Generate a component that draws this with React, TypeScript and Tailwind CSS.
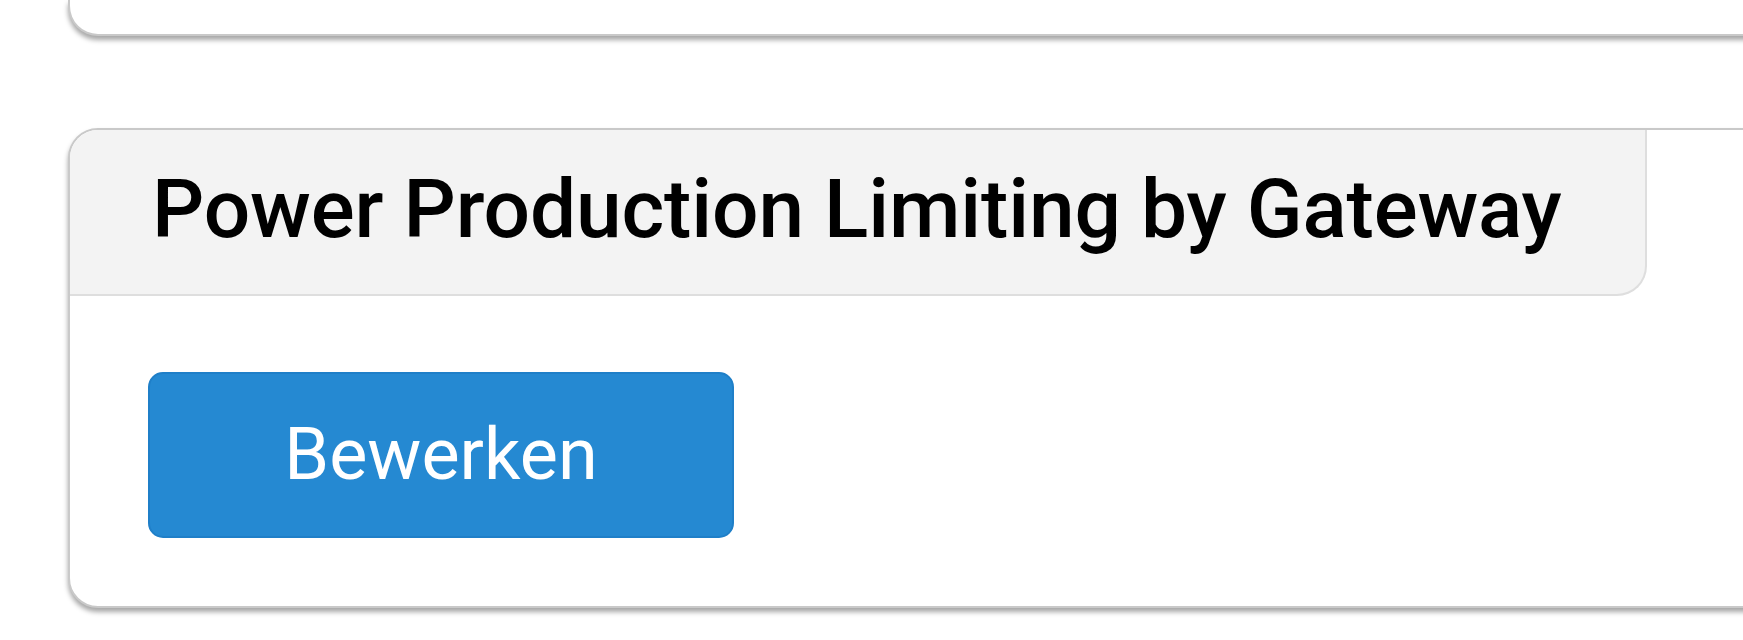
export default function App() {
  return (
    <div
      className="min-h-screen overflow-hidden bg-white pl-[68px]"
      style={{ fontFamily: 'Roboto, "Noto Sans", sans-serif' }}
    >
      {/* previous card, only its bottom edge is visible */}
      <div className="h-[36px] w-[1800px] rounded-b-[30px] border-2 border-t-0 border-[#c9c9c9] bg-white shadow-[0_4px_5px_rgba(0,0,0,0.35)]" />

      <div className="mt-[92px] w-[1800px] rounded-[30px] border-2 border-[#c9c9c9] bg-white shadow-[0_4px_5px_rgba(0,0,0,0.35)]">
        <div className="w-fit rounded-tl-[28px] rounded-br-[30px] border-b-2 border-r-2 border-[#dedede] bg-[#f3f3f3] pl-[82px] pr-[83px] pt-[36px] pb-[42px]">
          <h2 className="text-[82px] font-medium leading-[86px] tracking-[-0.15px] text-black">
            Power Production Limiting by Gateway
          </h2>
        </div>
        <div className="px-[78px] pt-[76px] pb-[68px]">
          <button
            type="button"
            className="flex h-[166px] w-[586px] items-center justify-center rounded-[15px] border-2 border-[#1f7fc8] bg-[#2589d2] text-[72px] text-white"
          >
            Bewerken
          </button>
        </div>
      </div>
    </div>
  )
}
